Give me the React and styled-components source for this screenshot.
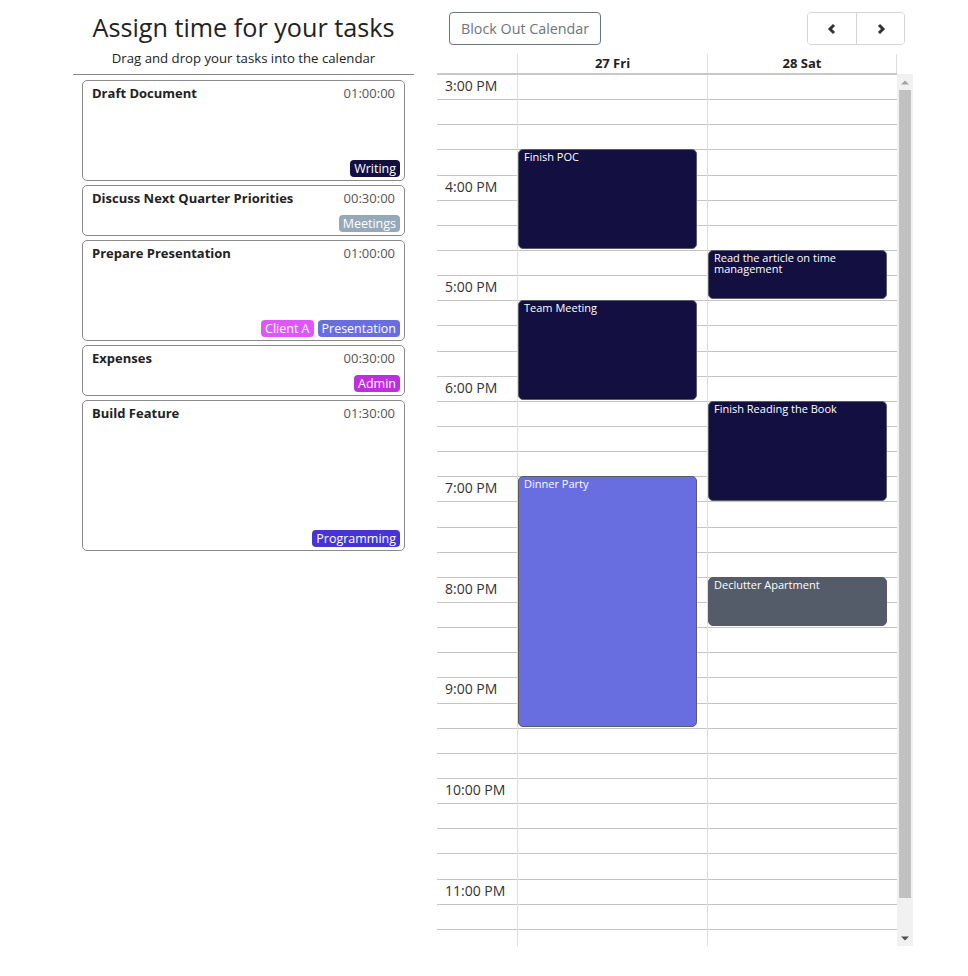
import React from 'react';
import styled, { createGlobalStyle } from 'styled-components';

const SLOT = 25.15;
const START_HOUR = 15;
const HOURS = 9;

const tasks = [
  { title: 'Draft Document', duration: '01:00:00', minutes: 60, tags: [{ label: 'Writing', color: '#130f40' }] },
  { title: 'Discuss Next Quarter Priorities', duration: '00:30:00', minutes: 30, tags: [{ label: 'Meetings', color: '#95a9bb' }] },
  {
    title: 'Prepare Presentation',
    duration: '01:00:00',
    minutes: 60,
    tags: [
      { label: 'Client A', color: '#e056fd' },
      { label: 'Presentation', color: '#686de0' },
    ],
  },
  { title: 'Expenses', duration: '00:30:00', minutes: 30, tags: [{ label: 'Admin', color: '#be2edd' }] },
  { title: 'Build Feature', duration: '01:30:00', minutes: 90, tags: [{ label: 'Programming', color: '#4834d4' }] },
];

const days = [
  {
    label: '27 Fri',
    events: [
      { title: 'Finish POC', start: '15:45', end: '16:45', color: '#130f40' },
      { title: 'Team Meeting', start: '17:15', end: '18:15', color: '#130f40' },
      { title: 'Dinner Party', start: '19:00', end: '21:30', color: '#686de0' },
    ],
  },
  {
    label: '28 Sat',
    events: [
      { title: 'Read the article on time management', start: '16:45', end: '17:15', color: '#130f40' },
      { title: 'Finish Reading the Book', start: '18:15', end: '19:15', color: '#130f40' },
      { title: 'Declutter Apartment', start: '20:00', end: '20:30', color: '#535c68' },
    ],
  },
];

const GlobalStyle = createGlobalStyle`
  body {
    margin: 0;
    font-family: "Open Sans", "Liberation Sans", sans-serif;
    color: #212529;
    background: #fff;
  }
  * { box-sizing: border-box; }
`;

const Page = styled.div`
  display: flex;
  align-items: flex-start;
  gap: 23px;
  padding-left: 73px;
`;

const Sidebar = styled.section`
  width: 341px;
  display: flex;
  flex-direction: column;
`;

const Heading = styled.header`
  text-align: center;
  padding-top: 12px;
  padding-bottom: 8px;
  border-bottom: 1px solid #888;
  h1 {
    margin: 0;
    font-size: 25.2px;
    font-weight: 400;
    line-height: 31px;
    color: #222;
  }
  p {
    margin: 7px 0 0;
    font-size: 13.2px;
    line-height: 16px;
    color: #222;
  }
`;

const TaskList = styled.div`
  display: flex;
  flex-direction: column;
  gap: 4px;
  padding: 5px 9px 0;
`;

const TaskCard = styled.div`
  height: ${(p) => Math.round((p.$minutes * 5) / 3) + 1}px;
  border: 1px solid #8a8a8a;
  border-radius: 5px;
  display: flex;
  flex-direction: column;
  padding: 3px 4px 3px 9px;
`;

const TaskHead = styled.div`
  display: flex;
  justify-content: space-between;
  padding-right: 5px;
  font-size: 13px;
  line-height: 18px;
  strong { font-weight: 700; color: #222; }
  span { color: #555; }
`;

const TagRow = styled.div`
  margin-top: auto;
  display: flex;
  justify-content: flex-end;
  gap: 4px;
`;

const Tag = styled.span`
  background: ${(p) => p.$color};
  color: #fff;
  font-size: 12.5px;
  line-height: 17px;
  padding: 0 4px;
  border-radius: 4px;
`;

const CalendarPane = styled.section`
  width: 476px;
  display: flex;
  flex-direction: column;
`;

const Toolbar = styled.div`
  display: flex;
  justify-content: space-between;
  align-items: center;
  padding: 12px 8px 0 12px;
  margin-bottom: 9px;
`;

const OutlineButton = styled.button`
  height: 33px;
  padding: 0 11px;
  font-family: inherit;
  font-size: 14.3px;
  color: #6c757d;
  background: #fff;
  border: 1px solid #6c757d;
  border-radius: 4px;
`;

const NavGroup = styled.div`
  display: flex;
  border: 1px solid #d4d4d4;
  border-radius: 4px;
  overflow: hidden;
`;

const NavButton = styled.button`
  width: 48px;
  height: 31px;
  display: flex;
  align-items: center;
  justify-content: center;
  background: #fff;
  border: none;
  padding: 0;
  color: #333;
  & + & { border-left: 1px solid #d4d4d4; }
`;

const HeaderRow = styled.div`
  width: 460px;
  display: grid;
  grid-template-columns: 80px 190px 190px;
  border-bottom: 2px solid #c8c8c8;
`;

const DayHead = styled.div`
  height: 19px;
  border-left: ${(p) => (p.$gutter ? 'none' : '1px solid #ddd')};
  border-right: ${(p) => (p.$last ? '1px solid #ddd' : 'none')};
  text-align: center;
  font-size: 13px;
  font-weight: 700;
  line-height: 18px;
  color: #222;
`;

const Body = styled.div`
  height: 872px;
  display: flex;
  margin-top: -1px;
  overflow: hidden;
`;

const Grid = styled.div`
  width: 460px;
  flex: none;
  display: grid;
  grid-template-columns: 80px 190px 190px;
  align-self: flex-start;
  padding-top: 1px;
`;

const Column = styled.div`
  position: relative;
  border-left: ${(p) => (p.$gutter ? 'none' : '1px solid #ddd')};
`;

const Slot = styled.div`
  height: ${SLOT}px;
  border-bottom: 1px solid #c4c4c4;
  padding-left: 8px;
  font-size: 14px;
  line-height: 22px;
  color: #333;
  white-space: nowrap;
`;

const Event = styled.div`
  position: absolute;
  left: 0;
  right: 10px;
  background: ${(p) => p.$color};
  border: 1px solid #5a5a6a;
  border-radius: 5px;
  color: #fff;
  font-size: 11px;
  line-height: 11px;
  padding: 1px 5px;
`;

/* vertical scroll rail beside the time grid */
const ScrollRail = styled.div`
  width: 16px;
  flex: none;
  display: flex;
  flex-direction: column;
  background: #f1f1f1;
`;

const RailArrow = styled.div`
  height: 16px;
  display: flex;
  align-items: center;
  justify-content: center;
  color: ${(p) => (p.$disabled ? '#a3a3a3' : '#505050')};
`;

const RailThumb = styled.div`
  height: 808px;
  margin: 0 2px;
  background: #c1c1c1;
`;

const Chevron = ({ dir }) => (
  <svg width="10" height="12" viewBox="0 0 10 12" aria-hidden="true">
    <polyline
      points={dir === 'left' ? '7,2 3,6 7,10' : '3,2 7,6 3,10'}
      fill="none"
      stroke="currentColor"
      strokeWidth="3"
    />
  </svg>
);

const Triangle = ({ up }) => (
  <svg width="8" height="5" viewBox="0 0 8 5" aria-hidden="true">
    <polygon points={up ? '0,4.5 4,0.5 8,4.5' : '0,0.5 4,4.5 8,0.5'} fill="currentColor" />
  </svg>
);

const toSlots = (t) => {
  const [h, m] = t.split(':').map(Number);
  return ((h - START_HOUR) * 60 + m) / 15;
};

const slots = Array.from({ length: HOURS * 4 }, (_, i) => i);

const App = () => {
  return (
    <>
      <GlobalStyle />
      <Page>
        <Sidebar>
          <Heading>
            <h1>Assign time for your tasks</h1>
            <p>Drag and drop your tasks into the calendar</p>
          </Heading>
          <TaskList>
            {tasks.map((task) => (
              <TaskCard key={task.title} $minutes={task.minutes}>
                <TaskHead>
                  <strong>{task.title}</strong>
                  <span>{task.duration}</span>
                </TaskHead>
                <TagRow>
                  {task.tags.map((tag) => (
                    <Tag key={tag.label} $color={tag.color}>{tag.label}</Tag>
                  ))}
                </TagRow>
              </TaskCard>
            ))}
          </TaskList>
        </Sidebar>

        <CalendarPane>
          <Toolbar>
            <OutlineButton>Block Out Calendar</OutlineButton>
            <NavGroup>
              <NavButton aria-label="previous"><Chevron dir="left" /></NavButton>
              <NavButton aria-label="next"><Chevron dir="right" /></NavButton>
            </NavGroup>
          </Toolbar>

          <HeaderRow>
            <DayHead $gutter />
            {days.map((day, i) => (
              <DayHead key={day.label} $last={i === days.length - 1}>{day.label}</DayHead>
            ))}
          </HeaderRow>

          <Body>
            <Grid>
              <Column $gutter>
                {slots.map((i) => (
                  <Slot key={i}>
                    {i % 4 === 0 ? `${((START_HOUR + i / 4 - 1) % 12) + 1}:00 PM` : ''}
                  </Slot>
                ))}
              </Column>
              {days.map((day) => (
                <Column key={day.label}>
                  {slots.map((i) => (
                    <Slot key={i} />
                  ))}
                  {day.events.map((ev) => {
                    const top = toSlots(ev.start) * SLOT - 1;
                    const height = (toSlots(ev.end) - toSlots(ev.start)) * SLOT - 1;
                    return (
                      <Event key={ev.title} $color={ev.color} style={{ top, height }}>
                        {ev.title}
                      </Event>
                    );
                  })}
                </Column>
              ))}
            </Grid>
            <ScrollRail>
              <RailArrow $disabled><Triangle up /></RailArrow>
              <RailThumb />
              <RailArrow style={{ marginTop: 'auto' }}><Triangle /></RailArrow>
            </ScrollRail>
          </Body>
        </CalendarPane>
      </Page>
    </>
  );
};

export default App;
